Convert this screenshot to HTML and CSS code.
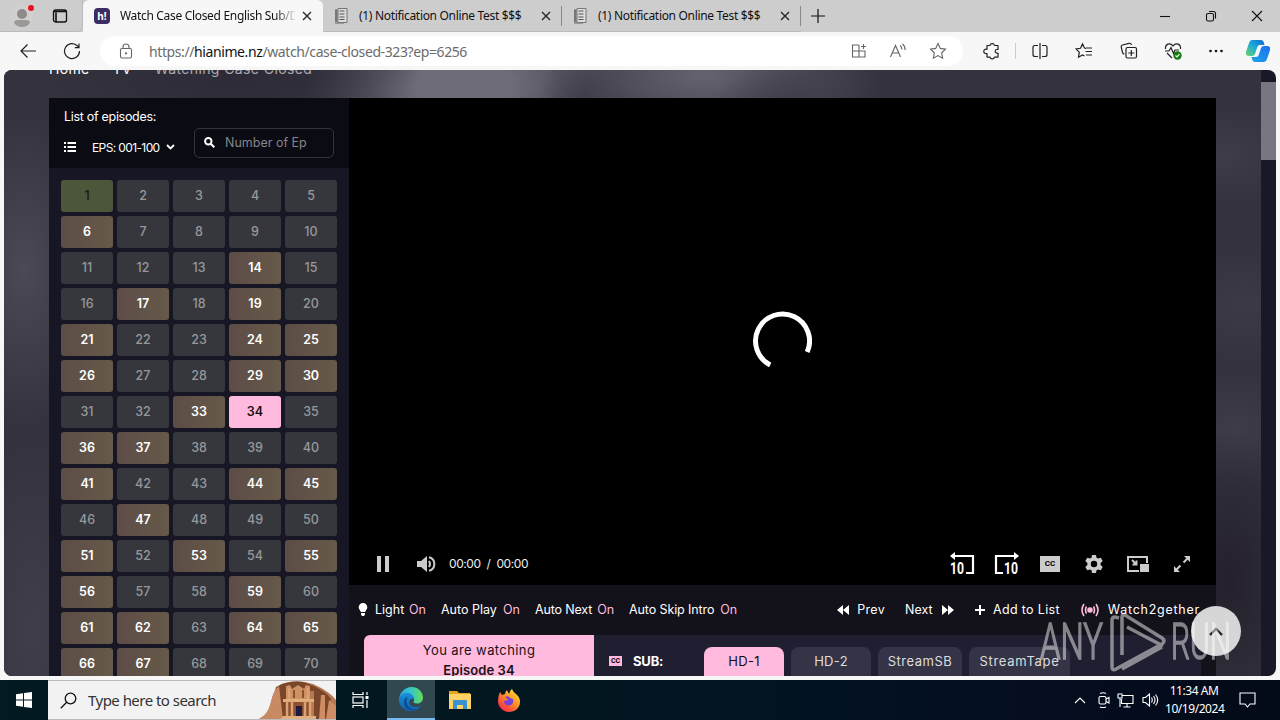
FILE: index.html
```
<!DOCTYPE html>
<html lang="en">
<head>
  <meta charset="UTF-8" />
  <title>Watch Case Closed English Sub/Dub online Free on HiAnime</title>
  <meta name="viewport" content="width=device-width, initial-scale=1.0" />
  <link rel="stylesheet" href="styles.css">
</head>
<body>

  <!-- Tab strip -->
  <div class="tabs">
    <div class="tabs-left">
      <svg class="profile" width="24" height="26" viewBox="0 0 24 26"><circle cx="12" cy="13" r="11.5" fill="#d2d0ce"/><circle cx="12" cy="11" r="5" fill="#8e8b89"/><path d="M4 20q0-3 4-3h8q4 0 4 3q-3 4-8 4t-8-4z" fill="#9b9896"/><circle cx="21" cy="5" r="3" fill="#e81123"/></svg>
      <svg class="tab-actions" width="16" height="16" viewBox="0 0 16 16" fill="none" stroke="#111" stroke-width="1.3"><rect x="1.5" y="2" width="13" height="12" rx="2"/><path d="M1.5 3.500h13M4 4.500V14" stroke-width="1.600"/></svg>
    </div>
    <div class="tab active">
      <svg width="16" height="16" viewBox="0 0 16 16"><rect width="16" height="16" rx="4" fill="#3b2c63"/><text x="8" y="12" text-anchor="middle" class="fav-text">h!</text></svg>
      <span class="tab-title fade">Watch Case Closed English Sub/D</span>
      <svg class="x" width="10" height="10" viewBox="0 0 10 10"><path d="M1 1l8 8M9 1l-8 8"/></svg>
    </div>
    <div class="tab second">
      <svg width="14" height="16" viewBox="0 0 14 16"><path d="M1 1h9v15H1z" fill="#999"/><path d="M4 .5h9v14H4z" fill="#ddd" stroke="#777"/><path d="M2 2v12M5.500 3h5M5.500 6h5M5.500 9h5M5.500 11.500h5" stroke="#555"/></svg>
      <span class="tab-title">(1) Notification Online Test $$$</span>
      <svg class="x" width="10" height="10" viewBox="0 0 10 10"><path d="M1 1l8 8M9 1l-8 8"/></svg>
    </div>
    <div class="tab third">
      <svg width="14" height="16" viewBox="0 0 14 16"><path d="M1 1h9v15H1z" fill="#999"/><path d="M4 .5h9v14H4z" fill="#ddd" stroke="#777"/><path d="M2 2v12M5.500 3h5M5.500 6h5M5.500 9h5M5.500 11.500h5" stroke="#555"/></svg>
      <span class="tab-title">(1) Notification Online Test $$$</span>
      <svg class="x" width="10" height="10" viewBox="0 0 10 10"><path d="M1 1l8 8M9 1l-8 8"/></svg>
    </div>
    <svg class="new-tab" width="14" height="14" viewBox="0 0 14 14"><path d="M7 0v14M0 7h14" stroke="#111" stroke-width="1.2"/></svg>
    <div class="win-buttons">
      <svg width="12" height="12" viewBox="0 0 12 12"><path d="M1 6.500h10"/></svg>
      <svg width="12" height="12" viewBox="0 0 12 12"><rect x="1.500" y="3.500" width="7" height="7.500" rx="1.500"/><path d="M4 1.500h4.500q2 0 2 2V8.500"/></svg>
      <svg width="12" height="12" viewBox="0 0 12 12"><path d="M1 1l10 10M11 1L1 11"/></svg>
    </div>
  </div>

  <!-- Address bar -->
  <div class="toolbar">
    <svg class="back" width="18" height="16" viewBox="0 0 18 16"><path d="M17 8H2M8.500 1.500L2 8l6.500 6.500"/></svg>
    <svg class="reload" width="18" height="18" viewBox="0 0 18 18"><path d="M16.500 9A7.500 7.500 0 1 1 14.500 4L16 5.500M16 1.500v4.200h-4.200"/></svg>
    <div class="address">
      <svg class="lock" width="14" height="16" viewBox="0 0 14 16"><rect x="1.500" y="5.500" width="11" height="9.500" rx="1.500"/><path d="M4 5.500V4a3 3 0 0 1 6 0v1.500"/><circle cx="7" cy="10.300" r=".6" fill="#555"/></svg>
      <span class="url">https://<b>hianime.nz</b>/watch/case-closed-323?ep=6256</span>
      <svg width="16" height="16" viewBox="0 0 16 16"><path d="M8 2H1.500v12H14V8H1.500M8 2v12M12.500 1v5M10 3.500h5"/></svg>
      <svg width="18" height="16" viewBox="0 0 18 16"><path d="M1.500 14L6.500 2.500 11.500 14M3.300 10h6.500M11 2.500q2 1.500 1.800 4M13.500 1q3 2.500 2.500 6"/></svg>
      <svg width="18" height="18" viewBox="0 0 18 18"><path d="M9 1.500l2.300 4.900 5.200.7-3.800 3.700.9 5.400L9 13.600l-4.600 2.600.9-5.400L1.500 7.100l5.200-.7z"/></svg>
    </div>
    <div class="tools">
      <svg width="18" height="18" viewBox="0 0 18 18"><path d="M4 3.500h3a2.300 2.300 0 0 1 4.500 0H15v4h-1a1.800 1.800 0 0 0 0 3.600h1v4h-3.500a2.300 2.300 0 0 1-4.500 0H4V11.500a2.300 2.300 0 1 1 0-4.200z" stroke-linejoin="round"/></svg>
      <i class="divider"></i>
      <svg width="18" height="18" viewBox="0 0 18 18"><path d="M7 3.500H4Q2 3.500 2 5.500v7q0 2 2 2h3M11 3.500h3q2 0 2 2v7q0 2-2 2h-3M9 1v16"/></svg>
      <svg width="18" height="18" viewBox="0 0 18 18"><path d="M11 6.500L9.500 6 7.500 2 5.500 6.300l-4.500.6 3.300 3.300-.8 5 4-2.300 2 1.200M11 6h6M10.500 9.500H17M11 13h6"/></svg>
      <svg width="18" height="18" viewBox="0 0 18 18"><path d="M4.500 12Q3 12 2.500 10.500L1.200 5Q1 3.500 2.500 3L9 1.300q2-.4 2.500 1.700M6 14.500V7q0-1.500 1.500-1.500H15q1.500 0 1.500 1.500v7.500q0 1.500-1.500 1.500H7.500Q6 16 6 14.500zM11.300 8v6M8.300 11h6"/></svg>
      <svg width="18" height="18" viewBox="0 0 18 18"><path d="M1.500 7C1 2 6 0 9 4c3-4 8-2 7.500 3M1 9h4l2-3.500 2.500 6L11 8h4M3 11l5 5"/><circle cx="13.500" cy="13.500" r="4.200" fill="#107c10" stroke="none"/><path d="M11.500 13.500l1.500 1.500 2.500-2.800" stroke="#fff"/></svg>
      <svg width="16" height="18" viewBox="0 0 16 18" class="dots"><circle cx="2.500" cy="9" r="1.300"/><circle cx="8" cy="9" r="1.300"/><circle cx="13.500" cy="9" r="1.300"/></svg>
    </div>
    <svg class="copilot" width="24" height="22" viewBox="0 0 24 22">
      <defs>
        <linearGradient id="cp1" x1="1" y1="0" x2="0" y2="1"><stop offset="0" stop-color="#1666c9"/><stop offset=".45" stop-color="#17a6de"/><stop offset="1" stop-color="#6bd36b"/></linearGradient>
        <linearGradient id="cp2" x1="0" y1="1" x2="1" y2="0"><stop offset="0" stop-color="#1ba5e8"/><stop offset="1" stop-color="#1c6ff0"/></linearGradient>
      </defs>
      <path d="M6 0h9q2 0 2.700 2l.8 3H14q-2 0-2.700 2L9 14q-.6 2-3 2H3q-4 0-3-4L3 3q.8-3 3-3z" fill="url(#cp1)"/>
      <path d="M18 22H9q-2 0-2.700-2L5.500 17H10q2 0 2.700-2L15 8q.6-2 3-2h3q4 0 3 4l-3 9q-.8 3-3 3z" fill="url(#cp2)"/>
    </svg>
  </div>

  <!-- Page -->
  <div class="viewport">
    <div class="page">
      <div class="breadcrumb"><span>Home</span><i></i><span>TV</span><i></i><em>Watching Case Closed</em></div>
      <div class="watch">
        <aside class="episodes">
          <div class="ep-header">
            <div class="ep-title">List of episodes:</div>
            <div class="ep-filter">
              <svg width="12" height="10" viewBox="0 0 12 10" fill="#fff"><path d="M0 0h2v2H0zM3.500 0H12v2H3.500zM0 4h2v2H0zM3.500 4H12v2H3.500zM0 8h2v2H0zM3.500 8H12v2H3.500z"/></svg>
              <span class="ep-range">EPS: 001-100</span>
              <svg class="caret" width="9" height="6" viewBox="0 0 9 6"><path d="M1 1l3.500 3.500L8 1" fill="none" stroke="#fff" stroke-width="1.800"/></svg>
              <div class="ep-search">
                <svg width="11" height="11" viewBox="0 0 11 11" fill="none" stroke="#fff" stroke-width="2"><circle cx="4.300" cy="4.300" r="3.200"/><path d="M6.700 6.700l3.600 3.600"/></svg>
                <span>Number of Ep</span>
              </div>
            </div>
          </div>
          <div class="ep-grid" id="epGrid"></div>
        </aside>

        <main class="main">
          <div class="player">
            <svg class="spinner" width="60" height="60" viewBox="0 0 60 60"><path d="M18.200 54A27 27 0 1 1 55.200 41" fill="none" stroke="#fff" stroke-width="5"/></svg>
            <div class="controls">
              <span class="ctl"><svg width="12" height="16" viewBox="0 0 12 16"><path d="M0 0h4v16H0zM8 0h4v16H8z"/></svg></span>
              <span class="ctl"><svg width="20" height="16" viewBox="0 0 20 16"><path d="M0 5h4l6-5v16l-6-5H0z"/><path d="M12 5q2 3 0 6M12 1.200a7 7 0 0 1 0 13.600" fill="none" stroke="#ccc" stroke-width="2"/></svg></span>
              <span class="time">00:00&nbsp; /&nbsp; 00:00</span>
              <span class="ctl seek right"><svg width="26" height="24" viewBox="0 0 26 24"><path d="M3 4h20v17h-7" fill="none" stroke="#fff" stroke-width="2.200"/><path d="M0 4l5-4v8z" fill="#fff"/><text x="0" y="22" textLength="14" lengthAdjust="spacingAndGlyphs">10</text></svg></span>
              <span class="ctl seek"><svg width="26" height="24" viewBox="0 0 26 24"><path d="M23 4H3v17h7" fill="none" stroke="#fff" stroke-width="2.200"/><path d="M26 4l-5-4v8z" fill="#fff"/><text x="11" y="22" textLength="14" lengthAdjust="spacingAndGlyphs">10</text></svg></span>
              <span class="ctl"><i class="cc">CC</i></span>
              <span class="ctl"><svg width="20" height="20" viewBox="0 0 20 20"><path fill-rule="evenodd" d="M8 1h4l.5 2.700 1.600.9 2.600-.9 2 3.400-2.100 1.800v2.200l2.100 1.800-2 3.400-2.600-.9-1.600.9L12 19H8l-.5-2.700-1.600-.9-2.600.9-2-3.400 2.100-1.800V8.900L1.300 7.100l2-3.400 2.600.9 1.600-.9zM10 6.800a3.200 3.200 0 1 0 0 6.400a3.200 3.200 0 0 0 0-6.400z"/></svg></span>
              <span class="ctl"><svg width="22" height="16" viewBox="0 0 22 16"><path d="M12 15H1V1h19v6M5 4l4 4M9.500 4.500V8.500h-4" fill="none" stroke="#ccc" stroke-width="2"/><path d="M13 8h9v8h-9z"/></svg></span>
              <span class="ctl"><svg width="16" height="16" viewBox="0 0 16 16"><path d="M10 0h6v6zM6 16H0v-6z"/><path d="M9.500 6.500L14 2M6.500 9.500L2 14" stroke="#ccc" stroke-width="2"/></svg></span>
            </div>
          </div>

          <div class="options">
            <svg class="bulb" width="10" height="13" viewBox="0 0 10 13" fill="#fff"><path d="M5 0a4.300 4.300 0 0 1 4.300 4.300C9.300 6.500 7.500 7 7.300 9H2.700C2.500 7 .7 6.500.7 4.300A4.300 4.300 0 0 1 5 0zM3 10h4v1.500L6 13H4l-1-1.500z"/></svg>
            <span class="opt light">Light <b>On</b></span>
            <span class="opt play">Auto Play <b>On</b></span>
            <span class="opt next">Auto Next <b>On</b></span>
            <span class="opt skip">Auto Skip Intro <b>On</b></span>
            <span class="opt prev"><svg width="12" height="10" viewBox="0 0 12 10" fill="#fff"><path d="M6 0v10L0 5zM12 0v10L6 5z"/></svg>Prev</span>
            <span class="opt nxt">Next<svg width="12" height="10" viewBox="0 0 12 10" fill="#fff"><path d="M0 0v10l6-5zM6 0v10l6-5z"/></svg></span>
            <span class="opt add"><svg width="10" height="10" viewBox="0 0 10 10"><path d="M5 0v10M0 5h10" stroke="#fff" stroke-width="2"/></svg>Add to List</span>
            <span class="opt w2g"><svg width="18" height="14" viewBox="0 0 18 14" fill="none" stroke="#ffbade" stroke-width="1.600"><circle cx="9" cy="7" r="2" fill="#ffbade"/><path d="M5.500 3.500q-2 3.500 0 7M12.500 3.500q2 3.500 0 7M3 1Q-1 7 3 13M15 1q4 6 0 12"/></svg>Watch2gether</span>
          </div>

          <div class="servers">
            <div class="watching">You are watching<br><b>Episode 34</b></div>
            <div class="server-list">
              <i class="cc pink">CC</i>
              <b class="sub">SUB:</b>
              <span class="server on">HD-1</span>
              <span class="server">HD-2</span>
              <span class="server sb">StreamSB</span>
              <span class="server tape">StreamTape</span>
            </div>
          </div>
        </main>
      </div>
    </div>
    <div class="scrollbar"><div class="thumb"></div></div>
    <div class="to-top"><svg width="14" height="9" viewBox="0 0 14 9"><path d="M1 8l6-6 6 6" fill="none" stroke="#222" stroke-width="2.400"/></svg></div>
  </div>

  <svg class="watermark" width="194" height="64" viewBox="0 0 194 64">
    <text x="1" y="50" textLength="63" lengthAdjust="spacingAndGlyphs">ANY</text>
    <text x="132" y="50" textLength="60" lengthAdjust="spacingAndGlyphs">RUN</text>
    <path d="M80 9L76 8q-3 0-3 3v47q0 4 4 2l46-25q4-3 0-6L86 6q-3-1-3 2v38M88 18l36 19M83 60l40-22" fill="none" stroke="#fff" stroke-width="3.500"/>
  </svg>

  <!-- Taskbar -->
  <div class="taskbar">
    <div class="start"><svg width="16" height="16" viewBox="0 0 16 16" fill="#fff"><path d="M0 2.200l7-1v6.300H0zM8 1l8-1v7.500H8zM0 8.500h7v6.300l-7-1zM8 8.500h8V16l-8-1z"/></svg></div>
    <div class="search">
      <svg width="17" height="17" viewBox="0 0 17 17" fill="none" stroke="#111" stroke-width="1.300"><circle cx="10.500" cy="6.500" r="5.300"/><path d="M6.700 10.300L.8 16.200"/></svg>
      <span>Type here to search</span>
      <svg class="petra" width="77" height="38" viewBox="0 0 77 38">
        <path d="M0 38q9-4 12-17Q16 3 26 2q14-4 28 1 16 7 23 16v19z" fill="#b87952"/>
        <path d="M17 6Q35-3 50 3q16 6 22 15l-5 20H55V10H28v28H18q-6-18-1-32z" fill="#7a4629"/>
        <path d="M0 38q9-4 12-17Q15 8 20 5q2 16 4 33z" fill="#c98a63"/>
        <path d="M27 5l4-1 2 4 6-4 6 4 2-4 4 1v13H27z" fill="#cd9164"/>
        <path d="M24 18h31v3H24zM24 35h33v3H22z" fill="#e3ae7d"/>
        <path d="M27 21h25v14H27z" fill="#8c5131"/>
        <path d="M28 20v15M33 20v15M46 20v15M51 20v15M30 7v11M49 7v11" stroke="#dda273" stroke-width="2.500"/>
        <path d="M35 9v8M44 9v8" stroke="#8c5131" stroke-width="2"/>
        <path d="M37 25h6v10h-6z" fill="#1e1b42"/>
        <path d="M62 14l4 0v24h-6zM70 19l7 6v13H67z" fill="#cd8c64"/>
      </svg>
    </div>
    <div class="task"><svg width="17" height="16" viewBox="0 0 17 16" fill="none" stroke="#fff" stroke-width="1.200"><path d="M1 0v2.500h10V0M1 16v-2.500h10V16M15 0v3M15 8v8"/><rect x="1" y="5" width="10" height="6"/><path d="M13.500 5.500h3" stroke-width="3"/></svg></div>
    <div class="task open">
      <svg width="24" height="24" viewBox="0 0 24 24">
        <defs>
          <linearGradient id="e1" x1="0" y1=".3" x2="1" y2=".3"><stop offset="0" stop-color="#29a4df"/><stop offset=".5" stop-color="#36c7c9"/><stop offset="1" stop-color="#65dc56"/></linearGradient>
          <linearGradient id="e2" x1="0" y1="0" x2="0" y2="1"><stop offset="0" stop-color="#198fd8"/><stop offset="1" stop-color="#1161b0"/></linearGradient>
        </defs>
        <path d="M0 12C1 5 6 0 12.500 0 19 0 24 5 24 10.500c0 4-3 6-6 6-2.500 0-4-1-3.500-2 1.500-2 .5-6-4-6C6 8.500 2 9 0 12z" fill="url(#e1)"/>
        <path d="M0 12c1-3.500 4-6 8-6 5 0 7 3 6.500 6-3-1-5 1-4 4.500 1 3.500 6 5 11.500 2C19.500 22 16 24 12 24 5 24-.5 18.500 0 12z" fill="url(#e2)"/>
        <path d="M9 10c-4 5 0 13 8 12-4 2.500-10 1-11.500-4S6 10.500 9 10z" fill="#0f4a8e"/>
      </svg>
    </div>
    <div class="task"><svg width="22" height="20" viewBox="0 0 22 20"><path d="M0 1h8l2 2h11v5H0z" fill="#e8a41c"/><path d="M0 4h22v15H0z" fill="#fcd364"/><path d="M4 19v-8q0-1 1-1h12q1 0 1 1v8h-4v-4H8v4z" fill="#3a92cf"/></svg></div>
    <div class="task"><svg width="24" height="24" viewBox="0 0 24 24">
      <defs><linearGradient id="f1" x1="1" y1="0" x2=".2" y2="1"><stop offset="0" stop-color="#fff04a"/><stop offset=".45" stop-color="#ff9a20"/><stop offset="1" stop-color="#f5214f"/></linearGradient></defs>
      <path d="M3 4l2 3 3-1q0-2 2-4l2 4q1-4 3-5 1 3 4 5 4 3 4 8c0 6-5 10-11 10S1 19 1 13q0-5 2-9z" fill="url(#f1)"/><path d="M8 9q3-2 5 1l3 1q1 6-4 6.500-5 0-5-5 3 1 4-1z" fill="#7542d9"/></svg></div>
    <div class="tray">
      <svg width="12" height="7" viewBox="0 0 12 7"><path d="M1 6l5-5 5 5"/></svg>
      <svg width="12" height="16" viewBox="0 0 12 16"><rect x="1" y="4.500" width="7" height="7.500" rx="1.500"/><path d="M8 7l3-1.500v5.500L8 9.500M2 1.500q3-1.500 6 0M2 15q3 1.300 6 0"/></svg>
      <svg width="17" height="15" viewBox="0 0 17 15"><path d="M5.500 2.500H16v8H4.500V6M10 10.500V14M6.500 14h7M1 1h4v4H1zM3 5v9"/></svg>
      <svg width="17" height="14" viewBox="0 0 17 14"><path d="M1 4.500h2.500l4-3.500v12l-4-3.500H1zM9.500 4.500q1.500 2.500 0 5M11.500 3q3 4 0 8M13.500 1.500q4.500 5.500 0 11"/></svg>
      <div class="clock">11:34 AM<br>10/19/2024</div>
      <svg class="note" width="17" height="16" viewBox="0 0 17 16"><path d="M1 1h15v11h-5l-2.500 3L6 12H1z"/></svg>
    </div>
  </div>

  <script>
    const watched = [6, 14, 17, 19, 21, 24, 25, 26, 29, 30, 33, 36, 37, 41, 44, 45, 47,
      51, 53, 55, 56, 59, 61, 62, 64, 65, 66, 67];
    const grid = document.getElementById("epGrid");

    for (let i = 1; i <= 70; i++) {
      const ep = document.createElement("div");
      ep.className = "ep";
      if (i === 1) ep.classList.add("first");
      if (i === 34) ep.classList.add("current");
      if (watched.includes(i)) ep.classList.add("filler");
      ep.textContent = i;
      grid.appendChild(ep);
    }
  </script>
</body>
</html>
```
FILE: styles.css
```
/* Reset & base */
* {
  box-sizing: border-box;
}
html, body {
  margin: 0;
  height: 720px;
  overflow: hidden;
}
body {
  position: relative;
  display: flex;
  flex-direction: column;
  background: #f7f7f7;
  font-family: 'Noto Sans', sans-serif;
  font-size: 12px;
  color: #111;
}
svg {
  display: block;
  flex: none;
}
i, em {
  font-style: normal;
}

/* Tab strip */
.tabs {
  height: 32px;
  flex: none;
  display: flex;
  background: #cdcdcd;
}
.tabs-left {
  width: 83px;
  display: flex;
  align-items: center;
  padding-left: 10px;
  border-right: 1px solid #bbb;
  border-bottom: 1px solid #bbb;
  border-radius: 0 0 6px 0;
}
.tab-actions {
  margin-left: 18px;
}
.tab {
  width: 239px;
  height: 32px;
  display: flex;
  align-items: center;
  padding-left: 11px;
  border-bottom: 1px solid #bbb;
}
.tab.active {
  width: 240px;
  background: #f7f7f7;
  border-bottom: 0;
  border-radius: 6px 6px 0 0;
}
.tab.second svg:first-child,
.tab.third svg:first-child {
  margin-right: 1px;
}
/* short separators after the inactive tabs */
.tab.second,
.tab.third {
  background: linear-gradient(#888, #888) right 6px / 1px 20px no-repeat;
}
.tab-title {
  width: 175px;
  margin-left: 10px;
  white-space: nowrap;
  overflow: hidden;
  line-height: 18px;
  letter-spacing: -0.32px;
}
.tab.active .tab-title {
  margin-top: -1px;
}
.fade {
  -webkit-mask-image: linear-gradient(90deg, #000 155px, transparent 177px);
  mask-image: linear-gradient(90deg, #000 155px, transparent 177px);
}
.fav-text {
  font: bold 10px 'Noto Sans', sans-serif;
  fill: #fff;
}
.x {
  margin-left: 7px;
  stroke: #222;
  stroke-width: 1.3;
}
.new-tab {
  margin: 9px 0 0 10px;
}
.win-buttons {
  margin-left: auto;
  display: flex;
  align-items: center;
  gap: 34px;
  padding-right: 17px;
  fill: none;
  stroke: #111;
  stroke-width: 1.1;
}

/* Address bar */
.toolbar {
  height: 38px;
  flex: none;
  display: flex;
  align-items: center;
  padding: 0 10px 0 19px;
  fill: none;
  stroke: #222;
  stroke-width: 1.2;
}
.reload {
  margin-left: 26px;
}
.address {
  width: 863px;
  height: 30px;
  margin-left: 19px;
  padding: 0 16px 0 19px;
  display: flex;
  align-items: center;
  gap: 22px;
  background: #fff;
  border-radius: 15px;
  stroke: #666;
  stroke-width: 1.1;
}
.url {
  flex: 1;
  margin-left: -6px;
  font-size: 14px;
  letter-spacing: -0.4px;
  color: #6b6b6b;
}
.url b {
  font-weight: normal;
  color: #111;
}
.tools {
  display: flex;
  align-items: center;
  margin-left: 20px;
  gap: 26.4px;
}
.divider {
  width: 1px;
  height: 16px;
  margin: 0 -12px 0 -12px;
  background: #ccc;
}
.dots {
  fill: #111;
  stroke: none;
}
.copilot {
  margin-left: auto;
  stroke: none;
}

/* Page */
.viewport {
  position: relative;
  height: 606px;
  flex: none;
  margin: 0 4px 4px;
  display: flex;
  border-radius: 8px;
  overflow: hidden;
  background: #191826;
  font-family: Inter, sans-serif;
  color: #fff;
}
.page {
  width: 1257px;
  padding-left: 45px;
  background:
    radial-gradient(ellipse 80px 150px at 1225px 510px, #24212d, transparent),
    radial-gradient(ellipse 80px 60px at 1230px 360px, #3e3c47, transparent),
    radial-gradient(ellipse 80px 60px at 1240px 235px, #3c3a46, transparent),
    radial-gradient(ellipse 80px 50px at 1220px 85px, #3e3c48, transparent),
    radial-gradient(ellipse 190px 60px at 230px 0, #2c2a36, transparent),
    radial-gradient(ellipse 45px 50px at 580px 28px, #403e49, transparent),
    radial-gradient(ellipse 80px 40px at 790px 32px, #403e49, transparent),
    radial-gradient(ellipse 160px 90px at 460px 14px, #6e6c76 30%, transparent),
    radial-gradient(ellipse 180px 80px at 700px 5px, #65636e, transparent),
    radial-gradient(ellipse 80px 160px at 20px 200px, #4b4955, transparent),
    radial-gradient(ellipse 80px 200px at 30px 560px, #403e4a, transparent),
    #34323d;
}
.breadcrumb {
  height: 28px;
  display: flex;
  font-size: 14px;
  line-height: 16px;
  margin-top: -9px;
  margin-bottom: 9px;
}
.breadcrumb span {
  letter-spacing: .3px;
}
.breadcrumb i {
  width: 23px;
}
.breadcrumb em {
  color: #aaa9af;
  letter-spacing: .4px;
}
.watch {
  display: flex;
  width: 1167px;
  height: 578px;
}

/* Episode list */
.episodes {
  width: 300px;
  background: #171624;
}
.ep-header {
  height: 70px;
  padding: 10px 15px 0;
  background: #0b0b13;
}
.ep-title {
  font-size: 12.5px;
  line-height: 18px;
  letter-spacing: -.3px;
}
.ep-filter {
  display: flex;
  align-items: center;
  margin-top: 2px;
  height: 38px;
}
.ep-range {
  margin-left: 16px;
  width: 68px;
  font-size: 12px;
  letter-spacing: -.62px;
  white-space: nowrap;
}
.caret {
  margin-left: 6px;
}
.ep-search {
  display: flex;
  align-items: center;
  gap: 10px;
  width: 140px;
  height: 30px;
  margin: -9px 0 0 19px;
  padding-left: 9px;
  border: 1px solid #33333b;
  border-radius: 5px;
  color: #85858b;
  font-size: 12.5px;
  white-space: nowrap;
}
.ep-grid {
  display: grid;
  grid-template-columns: repeat(5, 52px);
  grid-auto-rows: 32px;
  gap: 4px;
  padding: 12px;
}
.ep {
  background: #35373d;
  border-radius: 3px;
  color: #97989b;
  font-size: 12.5px;
  font-weight: 500;
  line-height: 32px;
  text-align: center;
}
.ep.first {
  background: #4c5638;
  color: #161a12;
}
.ep.filler {
  background: linear-gradient(90deg, #5d4c47, #665a49);
  color: #fff;
  font-weight: 600;
}
.ep.current {
  background: #ffbade;
  color: #111;
  font-weight: 600;
}

/* Player */
.main {
  width: 867px;
  background: #13111a;
}
.player {
  position: relative;
  height: 487px;
  display: flex;
  flex-direction: column;
  justify-content: flex-end;
  background: #000;
}
.spinner {
  position: absolute;
  left: 403px;
  top: 213px;
}
.controls {
  display: flex;
  align-items: center;
  height: 42px;
  padding: 0 12px;
  fill: #ccc;
}
.ctl {
  width: 44px;
  display: flex;
  justify-content: center;
}
.ctl.seek {
  width: 43.500px;
}
.ctl.right {
  margin-left: auto;
}
.seek text {
  font: bold 17px Roboto, sans-serif;
  fill: #fff;
}
.time {
  margin-top: -2px;
  font: 12px Inter, sans-serif;
  letter-spacing: -.41px;
  color: #eee;
}
.cc {
  width: 20px;
  height: 16px;
  background: #ccc;
  color: #000;
  font: bold 8px/16px Roboto, sans-serif;
  text-align: center;
}

/* Options row */
.options {
  display: flex;
  align-items: center;
  height: 49px;
  margin-bottom: 1px;
  padding-left: 9px;
  font-size: 12.5px;
  white-space: nowrap;
}
.opt {
  display: flex;
  align-items: center;
  justify-content: space-between;
}
.opt b {
  font-weight: normal;
  color: #ffbade;
}
.light { width: 51px; margin-left: 7px; }
.play { width: 79px; margin-left: 15px; }
.next { width: 79px; margin-left: 15px; letter-spacing: -.15px; }
.skip { width: 108px; margin-left: 15px; letter-spacing: -.1px; }
.prev { width: 48px; margin-left: 100px; letter-spacing: .3px; }
.nxt { width: 49px; margin-left: 20px; }
.add { width: 85px; margin-left: 21px; letter-spacing: .35px; }
.w2g { width: 119px; margin-left: 21px; letter-spacing: .75px; }

/* Servers */
.servers {
  display: flex;
  height: 41px;
  margin: 0 15px;
  overflow: hidden;
  border-radius: 6px 6px 0 0;
  background: #201f31;
}
.watching {
  width: 230px;
  padding-top: 5px;
  background: #ffbade;
  color: #1b1118;
  font-size: 13px;
  line-height: 20px;
  letter-spacing: .4px;
  text-align: center;
}
.watching b {
  font-weight: 600;
  letter-spacing: .1px;
}
.server-list {
  display: flex;
  padding: 12px 0 0 15px;
  font-size: 13px;
  line-height: 29px;
}
.cc.pink {
  width: 13px;
  height: 10px;
  margin-top: 9px;
  background: #ffbade;
  font-size: 7px;
  line-height: 10px;
}
.sub {
  width: 71px;
  margin-left: 11px;
  letter-spacing: -.2px;
}
.server {
  width: 80px;
  height: 40px;
  margin-right: 7px;
  border-radius: 8px;
  background: #353446;
  color: #ddd;
  letter-spacing: .3px;
  text-align: center;
}
.server.on {
  background: #ffbade;
  color: #111;
}
.server.sb { width: 84px; letter-spacing: .5px; }
.server.tape { width: 101px; letter-spacing: .7px; }

.scrollbar {
  width: 15px;
  padding-top: 12px;
}
.thumb {
  height: 78px;
  background: #787681;
}
.to-top {
  position: absolute;
  left: 1187px;
  top: 536px;
  width: 50px;
  height: 50px;
  border-radius: 50%;
  background: #d6d6d6;
  display: flex;
  align-items: center;
  justify-content: center;
}

.watermark {
  position: absolute;
  left: 1039px;
  top: 609px;
  opacity: .48;
}
.watermark text {
  font: 300 50px Roboto, sans-serif;
  fill: #fff;
  stroke: #fff;
  stroke-width: 1.6;
}

/* Taskbar */
.taskbar {
  height: 40px;
  flex: none;
  display: flex;
  background: linear-gradient(90deg, #021a22, #02171f 40%, #021322 60%, #040e20 80%, #030a18);
  color: #fff;
}
.start {
  width: 48px;
  display: flex;
  align-items: center;
  justify-content: center;
}
.search {
  width: 288px;
  display: flex;
  align-items: center;
  padding-left: 12px;
  background: #f2f2f2;
  border: 1px solid #bbb;
  border-width: 1px 0;
  color: #333;
  font-size: 15px;
  letter-spacing: -.53px;
}
.search span {
  margin-left: 11px;
}
.petra {
  margin-left: auto;
}
.task {
  width: 49px;
  display: flex;
  align-items: center;
  justify-content: center;
}
.task.open {
  width: 48px;
  margin-left: 2px;
  background: #324850;
  border-bottom: 2px solid #76b9ed;
}
.tray {
  margin-left: auto;
  display: flex;
  align-items: center;
  gap: 8px;
  padding-right: 24px;
  fill: none;
  stroke: #fff;
  stroke-width: 1.1;
}
.tray svg:first-child {
  margin-right: 4px;
}
.tray svg:nth-child(2) {
  margin-right: -1px;
}
.clock {
  width: 58px;
  margin-left: -2px;
  font-size: 12px;
  line-height: 18px;
  letter-spacing: -.45px;
  text-align: center;
  white-space: nowrap;
}
.note {
  margin-left: 8px;
}
```
